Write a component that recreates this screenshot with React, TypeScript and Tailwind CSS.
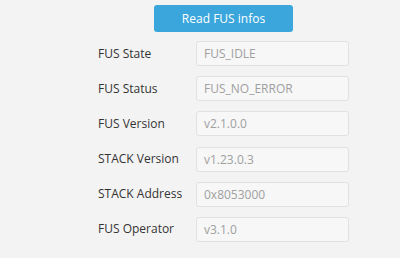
const fields = [
  { label: "FUS State", value: "FUS_IDLE" },
  { label: "FUS Status", value: "FUS_NO_ERROR" },
  { label: "FUS Version", value: "v2.1.0.0" },
  { label: "STACK Version", value: "v1.23.0.3" },
  { label: "STACK Address", value: "0x8053000" },
  { label: "FUS Operator", value: "v3.1.0" },
];

export default function App() {
  return (
    <div
      className="h-[258px] w-[400px] bg-[#f3f3f3] pt-[5px] pl-[98px]"
      style={{ fontFamily: '"Open Sans", "Noto Sans", sans-serif' }}
    >
      <div className="w-[251px]">
        <div className="flex justify-center">
          <button className="h-[27px] w-[139px] rounded-[3px] bg-[#3aa6dc] text-[12px] text-white">
            Read FUS infos
          </button>
        </div>
        <div className="mt-[9px] flex flex-col gap-[10.2px]">
          {fields.map((f) => (
            <div key={f.label} className="flex items-center">
              <span className="w-[98px] text-[12px] text-[#333]">{f.label}</span>
              <input
                readOnly
                value={f.value}
                className="h-[25px] w-[153px] rounded-[3px] border border-[#e1e1e1] bg-[#f7f7f7] px-[7px] text-[12px] text-[#a0a0a0] outline-none"
              />
            </div>
          ))}
        </div>
      </div>
    </div>
  );
}
